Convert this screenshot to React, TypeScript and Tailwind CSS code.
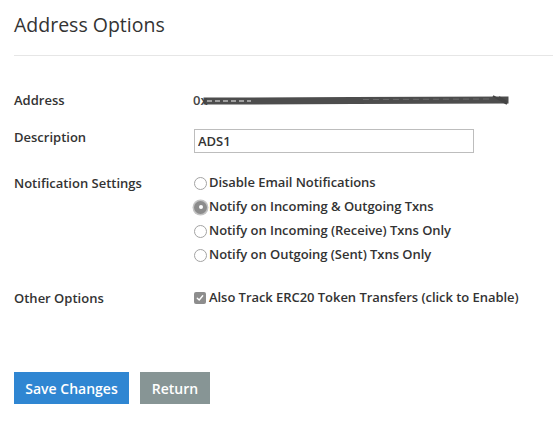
import React from "react";

const font = { fontFamily: '"Open Sans", "Liberation Sans", sans-serif' };

function Radio({ checked }: { checked?: boolean }) {
  if (checked) {
    return (
      <span className="flex h-[13px] w-[13px] shrink-0 items-center justify-center rounded-full bg-[#8c8c8c] shadow-[0_0_0_1.5px_#c4c4c4]">
        <span className="h-[4px] w-[4px] rounded-full bg-white" />
      </span>
    );
  }
  return <span className="h-[13px] w-[13px] shrink-0 rounded-full border border-[#a3a3a3] bg-white" />;
}

function Check() {
  return (
    <span className="flex h-[12px] w-[12px] shrink-0 items-center justify-center rounded-[2px] bg-[#8d8d8d]">
      <svg width="8" height="8" viewBox="0 0 8 8" fill="none">
        <path d="M1.3 4.2 L3.2 6 L6.7 1.8" stroke="white" strokeWidth="1.4" strokeLinecap="round" strokeLinejoin="round" />
      </svg>
    </span>
  );
}

// scribbled-out address
function Redacted() {
  return (
    <div className="relative h-[20px] w-[316px]">
      <span className="absolute left-0 top-0 text-[13px] font-semibold leading-[20px] text-[#444]">0x</span>
      <svg className="absolute left-0 top-0" width="316" height="20" viewBox="0 0 316 20">
        <path d="M14 11 L60 11 L160 10.5 L312 10" stroke="#444" strokeWidth="7" strokeLinecap="square" opacity="0.95" />
        <path d="M14 11 L58 11" stroke="#bbb" strokeWidth="1.5" strokeDasharray="5 3" />
        <path d="M170 9.5 L300 9" stroke="#777" strokeWidth="1" strokeDasharray="6 4" opacity="0.7" />
        <path d="M300 6 L314 14 M306 7 L314 12" stroke="#444" strokeWidth="2" />
      </svg>
    </div>
  );
}

export default function App() {
  const options = [
    { label: "Disable Email Notifications", checked: false },
    { label: "Notify on Incoming & Outgoing Txns", checked: true },
    { label: "Notify on Incoming (Receive) Txns Only", checked: false },
    { label: "Notify on Outgoing (Sent) Txns Only", checked: false },
  ];

  return (
    <div className="min-h-[425px] w-[553px] bg-white pl-[14px] text-[#333]" style={font}>
      <h1 className="pt-[12px] text-[19.5px] font-normal leading-[26px] text-[#333]">Address Options</h1>
      <div className="mt-[17px] h-px bg-[#e6e6e6]" />

      {/* Address */}
      <div className="mt-[34px] flex items-center">
        <div className="w-[179px] text-[13px] font-semibold leading-[20px]">Address</div>
        <Redacted />
      </div>

      {/* Description */}
      <div className="mt-[19px] flex items-start">
        <div className="w-[180px] text-[13px] font-semibold leading-[17px]">Description</div>
        <input
          defaultValue="ADS1"
          className="h-[24px] w-[280px] border border-[#bdbdbd] px-[3px] text-[13px] font-semibold text-[#333] outline-none"
          style={font}
        />
      </div>

      {/* Notification settings */}
      <div className="mt-[18px] flex items-start">
        <div className="w-[180px] text-[13px] font-semibold leading-[24px]">Notification Settings</div>
        <div className="flex flex-col">
          {options.map((o) => (
            <div key={o.label} className="flex h-[24px] items-center gap-[2px]">
              <Radio checked={o.checked} />
              <span className="text-[13px] font-semibold tracking-[-0.05px]">{o.label}</span>
            </div>
          ))}
        </div>
      </div>

      {/* Other options */}
      <div className="mt-[21px] flex items-center">
        <div className="w-[180px] text-[13px] font-semibold leading-[20px]">Other Options</div>
        <div className="flex items-center gap-[3px]">
          <Check />
          <span className="text-[13px] font-semibold tracking-[-0.05px]">Also Track ERC20 Token Transfers (click to Enable)</span>
        </div>
      </div>

      <div className="mt-[64px] flex gap-[11px]">
        <button className="h-[32px] w-[115px] bg-[#2f86d2] text-[14px] font-semibold text-white" style={font}>
          Save Changes
        </button>
        <button className="h-[32px] w-[70px] bg-[#879595] text-[14px] font-semibold text-white" style={font}>
          Return
        </button>
      </div>
    </div>
  );
}
